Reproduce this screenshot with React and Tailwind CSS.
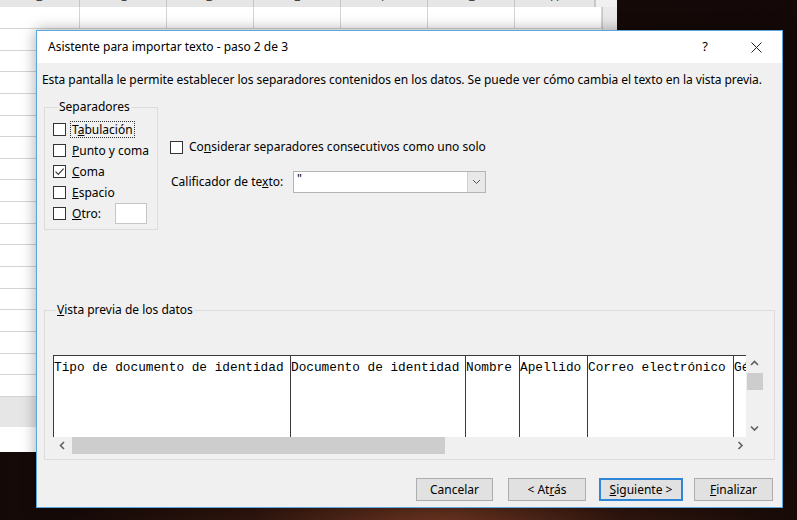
import React from "react";

const ui = "font-['Segoe_UI','Noto_Sans',sans-serif]";

function Box({ checked }) {
  return (
    <span className="flex h-[13px] w-[13px] shrink-0 items-center justify-center border border-[#333333] bg-white">
      {checked && (
        <svg width="11" height="11" viewBox="0 0 11 11">
          <path d="M1.5 5.6 L4.3 8.4 L9.6 2.6" fill="none" stroke="#333333" strokeWidth="1.1" />
        </svg>
      )}
    </span>
  );
}

function Chevron({ dir }) {
  const d = {
    up: "M1 5 L4.5 1.5 L8 5",
    down: "M1 1.5 L4.5 5 L8 1.5",
    left: "M5 1 L1.5 4.5 L5 8",
    right: "M1.5 1 L5 4.5 L1.5 8",
  }[dir];
  const vert = dir === "up" || dir === "down";
  return (
    <svg width={vert ? 9 : 7} height={vert ? 7 : 9} viewBox={vert ? "0 0 9 7" : "0 0 7 9"}>
      <path d={d} fill="none" stroke="#606060" strokeWidth="1.6" />
    </svg>
  );
}

const sepRows = [
  { pre: "T", key: "a", post: "bulación", focus: true },
  { pre: "", key: "P", post: "unto y coma" },
  { pre: "", key: "C", post: "oma", checked: true },
  { pre: "", key: "E", post: "spacio" },
  { pre: "", key: "O", post: "tro:", other: true },
];

const cols = [
  { label: "Tipo de documento de identidad", w: "w-[237px]" },
  { label: "Documento de identidad", w: "w-[175px]" },
  { label: "Nombre", w: "w-[54px]" },
  { label: "Apellido", w: "w-[68px]" },
  { label: "Correo electrónico", w: "w-[146px]" },
  { label: "Género", w: "w-[13px]" },
];

const sheetCols = ["B", "C", "D", "E", "F", "G", "H"];

export default function App() {
  return (
    <div className="relative h-[520px] w-[797px] overflow-hidden bg-[radial-gradient(ellipse_at_55%_105%,#6a3420_0%,#2e150e_30%,#160a08_60%,#120807_100%)]">
      {/* hoja de calculo de fondo */}
      <div className="flex h-[452px] w-[617px] flex-col bg-white">
        <div className="flex h-[7px] bg-[#e6e6e6]">
          <div className="flex flex-1 overflow-hidden">
            {sheetCols.map((c, i) => (
              <div
                key={c}
                className={`flex shrink-0 justify-center overflow-hidden border-r border-[#c6c6c6] ${i === 0 || i === 6 ? "w-[80px]" : "w-[87px]"}`}
              >
                <span className="-mt-[12px] font-['Noto_Sans',sans-serif] text-[13px] leading-[17px] text-[#444]">{c}</span>
              </div>
            ))}
          </div>
          <div className="w-[22px] border-l border-[#c8c8c8] bg-[#f0f0f0]" />
        </div>
        <div className="flex flex-1">
          <div className="flex flex-1 flex-col">
            <div className="flex h-[22px] border-b border-[#d4d4d4]">
              {sheetCols.map((c, i) => (
                <div
                  key={c}
                  className={`shrink-0 border-r border-[#d4d4d4] ${i === 0 ? "w-[80px]" : "w-[87px]"}`}
                />
              ))}
            </div>
            {Array.from({ length: 17 }).map((_, i) => (
              <div key={i} className="h-[21.65px] border-b border-[#d4d4d4]" />
            ))}
            <div className="h-[30px] bg-[#e6e6e6]" />
            <div className="flex-1 bg-white" />
          </div>
          <div className="w-[22px] border-l border-[#c8c8c8] bg-[#e9e9e9]" />
        </div>
      </div>

      {/* dialogo */}
      <div
        className={`absolute left-[36px] top-[30px] flex h-[478px] w-[747px] flex-col border border-[#5aa6de] bg-[#f0f0f0] text-[12px] text-black shadow-[0_0_14px_rgba(0,0,0,0.35)] ${ui}`}
      >
        <div className="flex h-[32px] items-center bg-white pl-[11px] pr-[20px]">
          <span>Asistente para importar texto - paso 2 de 3</span>
          <span className="ml-auto mr-[43px] text-[13px]">?</span>
          <svg width="11" height="11" viewBox="0 0 11 11">
            <path d="M0.5 0.5 L10.5 10.5 M10.5 0.5 L0.5 10.5" stroke="#222" strokeWidth="1" />
          </svg>
        </div>

        <div className="flex flex-1 flex-col px-[7px]">
          <p className="mt-[9px] -ml-[2px] whitespace-nowrap tracking-[-0.05px] leading-[16px]">
            Esta pantalla le permite establecer los separadores contenidos en los datos. Se puede ver cómo cambia el texto en la vista previa.
          </p>

          <div className="mt-[11px] flex">
            <fieldset className="w-[114px] border border-[#dcdcdc] pb-[5px] pl-[8px] pr-[2px] pt-[4px]">
              <legend className="ml-[5px] px-[1px] leading-[16px]">Separadores</legend>
              {sepRows.map((r) => (
                <div key={r.post} className="flex h-[21px] items-center whitespace-nowrap">
                  <Box checked={r.checked} />
                  <span
                    className={`ml-[5px] px-[1px] leading-[15px] ${r.focus ? "outline-1 outline-dotted outline-[#333]" : ""}`}
                  >
                    {r.pre}
                    <span className="underline">{r.key}</span>
                    {r.post}
                  </span>
                  {r.other && <span className="ml-auto mr-[8px] h-[21px] w-[32px] border border-[#c5c5c5] bg-white" />}
                </div>
              ))}
            </fieldset>

            <div className="ml-[12px] flex flex-col pt-[40px]">
              <label className="flex h-[16px] items-center">
                <Box />
                <span className="ml-[6px]">
                  Co<span className="underline">n</span>siderar separadores consecutivos como uno solo
                </span>
              </label>
              <div className="mt-[16px] flex h-[22px] items-center">
                <span className="ml-[1px] w-[122px]">
                  Calificador de te<span className="underline">x</span>to:
                </span>
                <div className="flex h-[22px] w-[193px] border border-[#b4b4b4] bg-white">
                  <span className="flex-1 pl-[3px] leading-[14px]">"</span>
                  <span className="flex w-[18px] items-center justify-center border-l border-[#d0d0d0] bg-[#e8e8e8]">
                    <svg width="9" height="6" viewBox="0 0 9 6">
                      <path d="M1 1 L4.5 4.5 L8 1" fill="none" stroke="#555" strokeWidth="1" />
                    </svg>
                  </span>
                </div>
              </div>
            </div>
          </div>

          <fieldset className="mt-[72px] border border-[#dcdcdc] px-[8px] pb-[5px] pt-[37px]">
            <legend className="ml-[3px] px-[1px] leading-[16px]">
              <span className="underline">V</span>ista previa de los datos
            </legend>
            <div className="flex flex-col">
              <div className="flex h-[82px]">
                <div className="flex w-[693px] overflow-hidden border-t border-[#3a3a3a] bg-white font-['Liberation_Mono','Courier_New',monospace] text-[12.75px] leading-[15px]">
                  {cols.map((c) => (
                    <div key={c.label} className={`${c.w} shrink-0 overflow-hidden whitespace-nowrap border-l border-[#3a3a3a] pt-[4px]`}>
                      {c.label}
                    </div>
                  ))}
                </div>
                <div className="flex w-[17px] flex-col items-center bg-[#f0f0f0]">
                  <div className="flex h-[17px] items-center">
                    <Chevron dir="up" />
                  </div>
                  <div className="mt-[1px] h-[17px] w-[16px] bg-[#cdcdcd]" />
                  <div className="mt-auto flex h-[17px] items-center">
                    <Chevron dir="down" />
                  </div>
                </div>
              </div>
              <div className="flex h-[17px] bg-[#f0f0f0]">
                <div className="flex w-[19px] items-center justify-center">
                  <Chevron dir="left" />
                </div>
                <div className="w-[373px] bg-[#cdcdcd]" />
                <div className="ml-auto mr-[17px] flex w-[17px] items-center justify-center">
                  <Chevron dir="right" />
                </div>
              </div>
            </div>
          </fieldset>

          <div className="mt-[18px] flex justify-end pr-[2px]">
            <button className="h-[23px] w-[77px] border border-[#adadad] bg-[#e1e1e1]">Cancelar</button>
            <button className="ml-[15px] h-[23px] w-[78px] border border-[#adadad] bg-[#e1e1e1]">
              &lt; At<span className="underline">r</span>ás
            </button>
            <button className="ml-[13px] h-[23px] w-[84px] border-2 border-[#2f86d6] bg-[#e1e1e1]">
              <span className="underline">S</span>iguiente &gt;
            </button>
            <button className="ml-[11px] h-[23px] w-[79px] border border-[#adadad] bg-[#e1e1e1]">
              <span className="underline">F</span>inalizar
            </button>
          </div>
        </div>
      </div>
    </div>
  );
}
